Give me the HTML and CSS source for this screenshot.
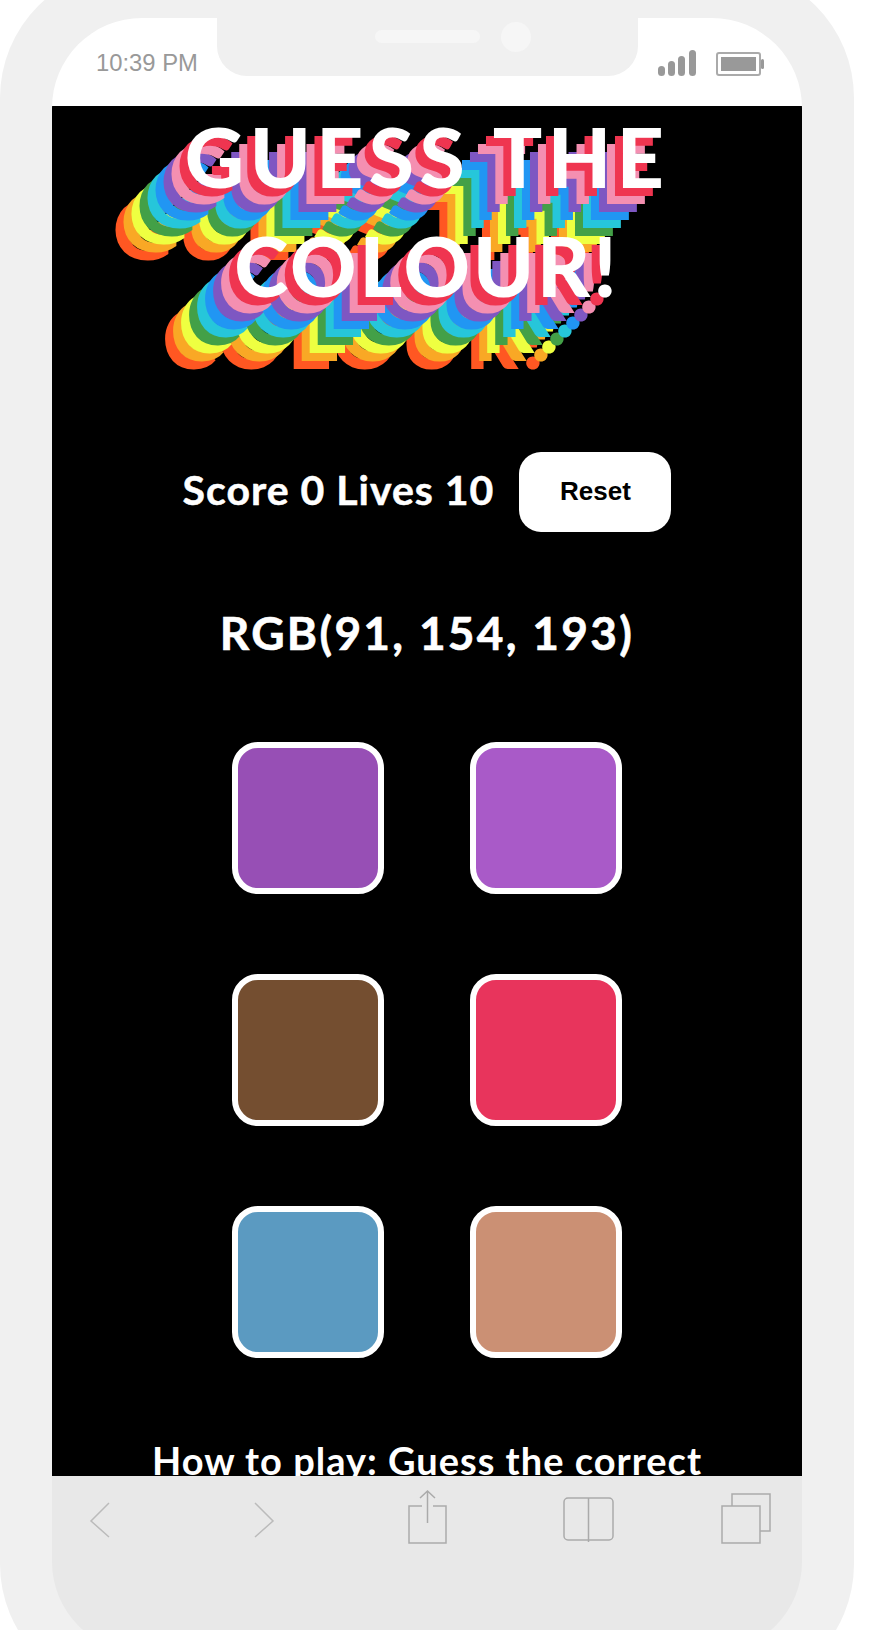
FILE: index.html
```html
<!DOCTYPE html>
<html lang="en">
<head>
  <meta charset="UTF-8">
  <title>Guess the Colour</title>
  <link rel="stylesheet" href="styles.css">
</head>
<body>

  <div class="phone">
    <div class="device">
      <div class="notch">
        <div class="speaker"></div>
        <div class="camera"></div>
      </div>

      <div class="status-bar">
        <span class="time">10:39 PM</span>
        <div class="status-icons">
          <svg class="signal" width="40" height="26" viewBox="0 0 40 26">
            <rect x="1" y="16" width="7" height="10" rx="3.5"/>
            <rect x="11" y="11" width="7" height="15" rx="3.5"/>
            <rect x="21" y="6" width="7" height="20" rx="3.5"/>
            <rect x="32" y="0" width="7" height="26" rx="3.5"/>
          </svg>
          <svg class="battery" width="48" height="24" viewBox="0 0 48 24">
            <rect class="battery-case" x="1" y="1" width="43" height="22" rx="2"/>
            <rect class="battery-level" x="5" y="5" width="35" height="14"/>
            <rect class="battery-level" x="45" y="7" width="3" height="10" rx="1.5"/>
          </svg>
        </div>
      </div>

      <main class="app">
        <h1 class="title"><span class="title-top">GUESS THE</span> COLOUR!</h1>

        <div class="score-row">
          <span class="score">Score 0 Lives 10</span>
          <button class="reset">Reset</button>
        </div>

        <h2 class="rgb">RGB(91, 154, 193)</h2>

        <div class="swatches">
          <div class="swatch purple"></div>
          <div class="swatch violet"></div>
          <div class="swatch brown"></div>
          <div class="swatch red"></div>
          <div class="swatch blue"></div>
          <div class="swatch tan"></div>
        </div>

        <p class="how-to">How to play: Guess the correct</p>
      </main>

      <nav class="toolbar">
        <svg class="tool tool-light" width="60" height="60" viewBox="0 0 60 60">
          <path d="M39 15L21 33L39 49"/>
        </svg>
        <svg class="tool tool-light" width="60" height="60" viewBox="0 0 60 60">
          <path d="M23 15L41 33L23 49"/>
        </svg>
        <svg class="tool" width="60" height="60" viewBox="0 0 60 60">
          <path d="M28 18H15V55H52V18H39"/>
          <path d="M33.5 35V3M26 10L33.5 3L41 10"/>
        </svg>
        <svg class="tool" width="60" height="60" viewBox="0 0 60 60">
          <rect x="8" y="10" width="49" height="42" rx="4"/>
          <path d="M32.5 10V54"/>
        </svg>
        <svg class="tool" width="60" height="60" viewBox="0 0 60 60">
          <rect x="4" y="18" width="38" height="37"/>
          <path d="M14 18V6H52V43H42"/>
        </svg>
      </nav>
    </div>
  </div>

</body>
</html>
```

FILE: styles.css
```css
html, body {
  height: 100%;
  margin: 0;
  overflow: hidden;
  background: #fff;
}

.phone {
  width: 854px;
  height: 1726px;
  margin-top: -32px;
  padding: 50px 52px 42px;
  box-sizing: border-box;
  background: #f0f0f0;
  border-radius: 130px;
}

.device {
  position: relative;
  height: 100%;
  display: flex;
  flex-direction: column;
  border-radius: 90px;
  overflow: hidden;
}

.notch {
  position: absolute;
  top: 0;
  left: 165px;
  width: 421px;
  height: 58px;
  display: flex;
  justify-content: center;
  gap: 21px;
  padding: 4px 0 0 50px;
  box-sizing: border-box;
  background: #f0f0f0;
  border-radius: 0 0 30px 30px;
}

.speaker {
  width: 105px;
  height: 13px;
  margin-top: 8px;
  background: #f6f6f6;
  border-radius: 7px;
}

.camera {
  width: 30px;
  height: 30px;
  background: #f6f6f6;
  border-radius: 50%;
}

.status-bar {
  height: 88px;
  flex: none;
  display: flex;
  justify-content: space-between;
  align-items: flex-start;
  padding: 30px 38px 0 44px;
  box-sizing: border-box;
  background: #fff;
}

.time {
  font-family: "Liberation Sans", Arial, sans-serif;
  font-size: 23.8px;
  line-height: 30px;
  color: #999;
}

.status-icons {
  display: flex;
  align-items: flex-end;
  gap: 19px;
  margin-top: 2px;
}

.signal {
  fill: #999;
}

.battery-case {
  fill: none;
  stroke: #aaa;
  stroke-width: 2;
}

.battery-level {
  fill: #999;
}

.app {
  flex: 1;
  min-height: 0;
  overflow: hidden;
  background: #000;
  color: #fff;
  text-align: center;
  font-family: Lato, "Noto Sans", sans-serif;
  font-weight: 700;
}

.title {
  width: 560px;
  margin: -4px auto 132px;
  font-size: 82px;
  font-weight: 900;
  line-height: 109px;
  letter-spacing: 3px;
  text-shadow:
    -8px 8px 0 #ef3550,
    -16px 16px 0 #f48fb1,
    -24px 24px 0 #7e57c2,
    -32px 32px 0 #2196f3,
    -40px 40px 0 #26c6da,
    -48px 48px 0 #43a047,
    -56px 56px 0 #eeff41,
    -64px 64px 0 #f9a825,
    -72px 72px 0 #ff5722;
}

.title-top {
  letter-spacing: 5.5px;
}

.score-row {
  display: flex;
  justify-content: center;
  align-items: center;
  gap: 25px;
}

.score {
  padding-bottom: 5px;
  font-size: 41px;
  letter-spacing: 1px;
  -webkit-text-stroke: 0.5px #fff;
}

.reset {
  width: 152px;
  height: 80px;
  padding: 0 0 2px;
  border: none;
  border-radius: 22px;
  background: #fff;
  color: #000;
  font-family: "Liberation Sans", Arial, sans-serif;
  font-size: 26px;
  font-weight: 700;
}

.rgb {
  margin: 71px 0 0;
  font-size: 46px;
  font-weight: 700;
  line-height: 60px;
  letter-spacing: 2.3px;
  -webkit-text-stroke: 0.6px #fff;
}

.swatches {
  display: grid;
  grid-template-columns: 152px 152px;
  grid-auto-rows: 152px;
  justify-content: center;
  column-gap: 86px;
  row-gap: 80px;
  margin-top: 79px;
}

.swatch {
  border: 6px solid #fff;
  border-radius: 26px;
}

.purple { background: #974fb5; }
.violet { background: #a95ac8; }
.brown { background: #744e30; }
.red { background: #e8345c; }
.blue { background: #5b9ac1; }
.tan { background: #cb9074; }

.how-to {
  margin: 77px 0 0;
  font-size: 38px;
  line-height: 50px;
  letter-spacing: 1px;
}

.toolbar {
  height: 176px;
  flex: none;
  display: flex;
  align-items: flex-start;
  gap: 102px;
  padding: 12px 0 0 18px;
  box-sizing: border-box;
  background: #e8e8e8;
}

.tool {
  fill: none;
  stroke: #aaa;
  stroke-width: 1.5;
}

.tool-light {
  stroke: #bbb;
}
```
